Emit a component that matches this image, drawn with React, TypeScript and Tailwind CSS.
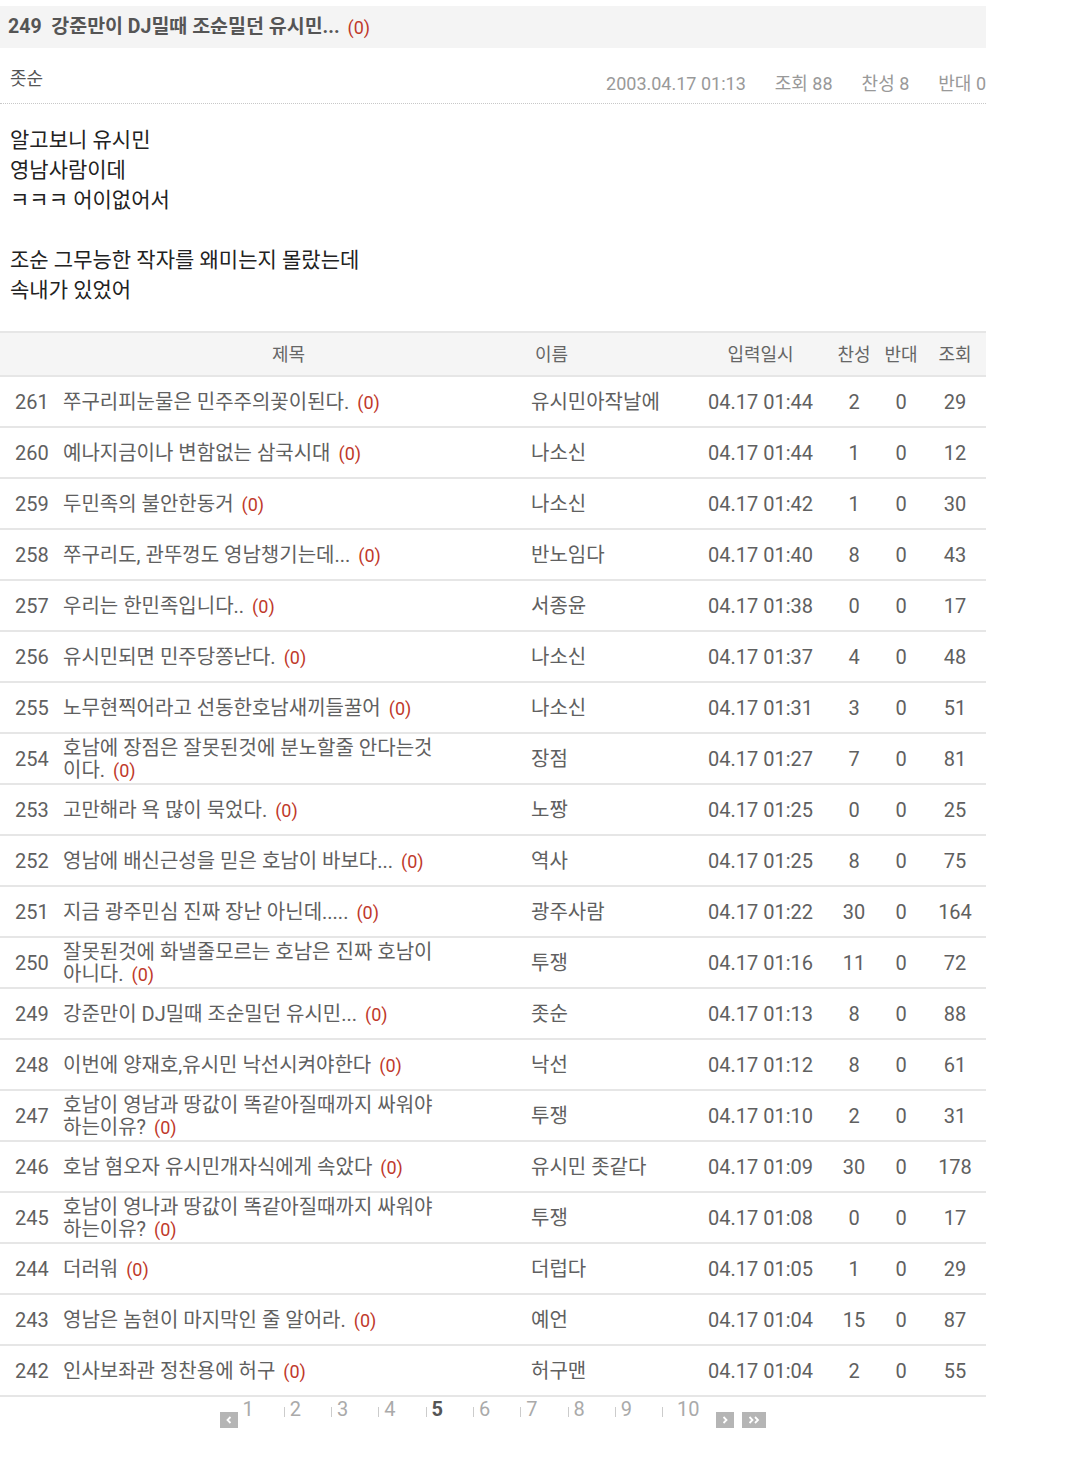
import React from "react";

type Post = {
  no: number;
  title: string;
  name: string;
  date: string;
  up: number;
  down: number;
  views: number;
};

const POSTS: Post[] = [
  { no: 261, title: "쭈구리피눈물은 민주주의꽃이된다.", name: "유시민아작날에", date: "04.17 01:44", up: 2, down: 0, views: 29 },
  { no: 260, title: "예나지금이나 변함없는 삼국시대", name: "나소신", date: "04.17 01:44", up: 1, down: 0, views: 12 },
  { no: 259, title: "두민족의 불안한동거", name: "나소신", date: "04.17 01:42", up: 1, down: 0, views: 30 },
  { no: 258, title: "쭈구리도, 관뚜껑도 영남챙기는데...", name: "반노임다", date: "04.17 01:40", up: 8, down: 0, views: 43 },
  { no: 257, title: "우리는 한민족입니다..", name: "서종윤", date: "04.17 01:38", up: 0, down: 0, views: 17 },
  { no: 256, title: "유시민되면 민주당쫑난다.", name: "나소신", date: "04.17 01:37", up: 4, down: 0, views: 48 },
  { no: 255, title: "노무현찍어라고 선동한호남새끼들꿀어", name: "나소신", date: "04.17 01:31", up: 3, down: 0, views: 51 },
  { no: 254, title: "호남에 장점은 잘못된것에 분노할줄 안다는것 이다.", name: "장점", date: "04.17 01:27", up: 7, down: 0, views: 81 },
  { no: 253, title: "고만해라 욕 많이 묵었다.", name: "노짱", date: "04.17 01:25", up: 0, down: 0, views: 25 },
  { no: 252, title: "영남에 배신근성을 믿은 호남이 바보다...", name: "역사", date: "04.17 01:25", up: 8, down: 0, views: 75 },
  { no: 251, title: "지금 광주민심 진짜 장난 아닌데.....", name: "광주사람", date: "04.17 01:22", up: 30, down: 0, views: 164 },
  { no: 250, title: "잘못된것에 화낼줄모르는 호남은 진짜 호남이 아니다.", name: "투쟁", date: "04.17 01:16", up: 11, down: 0, views: 72 },
  { no: 249, title: "강준만이 DJ밀때 조순밀던 유시민...", name: "좃순", date: "04.17 01:13", up: 8, down: 0, views: 88 },
  { no: 248, title: "이번에 양재호,유시민 낙선시켜야한다", name: "낙선", date: "04.17 01:12", up: 8, down: 0, views: 61 },
  { no: 247, title: "호남이 영남과 땅값이 똑같아질때까지 싸워야 하는이유?", name: "투쟁", date: "04.17 01:10", up: 2, down: 0, views: 31 },
  { no: 246, title: "호남 혐오자 유시민개자식에게 속았다", name: "유시민 좃같다", date: "04.17 01:09", up: 30, down: 0, views: 178 },
  { no: 245, title: "호남이 영나과 땅값이 똑같아질때까지 싸워야 하는이유?", name: "투쟁", date: "04.17 01:08", up: 0, down: 0, views: 17 },
  { no: 244, title: "더러워", name: "더럽다", date: "04.17 01:05", up: 1, down: 0, views: 29 },
  { no: 243, title: "영남은 놈현이 마지막인 줄 알어라.", name: "예언", date: "04.17 01:04", up: 15, down: 0, views: 87 },
  { no: 242, title: "인사보좌관 정찬용에 허구", name: "허구맨", date: "04.17 01:04", up: 2, down: 0, views: 55 },
];

const BODY = ["알고보니 유시민", "영남사람이데", "ㅋㅋㅋ 어이없어서", "", "조순 그무능한 작자를 왜미는지 몰랐는데", "속내가 있었어"];

const COLS = "grid grid-cols-[63px_468px_152px_153px_36px_58px_56px]";

function Count() {
  return <span className="ml-2 inline-block text-[18px] leading-[20px] text-[#c0392b]">(0)</span>;
}

function PostRow({ post }: { post: Post }) {
  return (
    <div className={`${COLS} h-[51px] items-center border-b-2 border-[#e6e6e6] text-[20px] text-[#606060]`}>
      <div className="pl-[15px]">{post.no}</div>
      <div className="max-w-[380px] leading-[22px]">
        {post.title}
        <Count />
      </div>
      <div className="whitespace-nowrap">{post.name}</div>
      <div className="pl-[2px] text-center">{post.date}</div>
      <div className="text-center">{post.up}</div>
      <div className="text-center">{post.down}</div>
      <div className="pr-[6px] text-center">{post.views}</div>
    </div>
  );
}

// small grey nav buttons with white chevrons
function PageBox({ kind }: { kind: "prev" | "next" | "last" }) {
  const wide = kind === "last";
  return (
    <span className={`mt-[15px] flex h-[16px] items-center justify-center bg-[#b5b5b5] ${wide ? "w-[24px]" : "w-[18px]"}`}>
      <svg width={wide ? 12 : 6} height="8" viewBox={wide ? "0 0 12 8" : "0 0 6 8"} fill="none" stroke="white" strokeWidth="1.8">
        {kind === "prev" && <polyline points="4.5,1 1.5,4 4.5,7" />}
        {kind === "next" && <polyline points="1.5,1 4.5,4 1.5,7" />}
        {kind === "last" && (
          <>
            <polyline points="1.5,1 4.5,4 1.5,7" />
            <polyline points="7,1 10,4 7,7" />
          </>
        )}
      </svg>
    </span>
  );
}

export default function App() {
  return (
    <div className="min-h-[1469px] w-[1080px] bg-white font-['Roboto','Noto_Sans_CJK_KR',sans-serif]">
      <div className="w-[986px] pt-[6px]">
        {/* post header */}
        <div className="flex h-[42px] items-center bg-[#f4f4f4] pl-[8px] text-[19.5px] font-bold text-[#555]">
          249&nbsp; 강준만이 DJ밀때 조순밀던 유시민...
          <span className="ml-2 text-[18px] font-normal text-[#c0392b]">(0)</span>
        </div>
        <div className="flex h-[56px] items-center justify-between border-b border-dotted border-[#c8c8c8] pl-[10px]">
          <span className="pt-[6px] text-[18px] text-[#555]">좃순</span>
          <div className="flex gap-[29px] pt-[16px] text-[18px] text-[#999]">
            <span>2003.04.17 01:13</span>
            <span>조회 88</span>
            <span>찬성 8</span>
            <span>반대 0</span>
          </div>
        </div>

        {/* post body */}
        <div className="pl-[10px] pt-[21px] text-[21px] leading-[30px] text-[#222]">
          {BODY.map((line, i) => (
            <div key={i} className="h-[30px]">
              {line}
            </div>
          ))}
        </div>

        {/* post list */}
        <div className="mt-[26px] border-t-2 border-[#e6e6e6]">
          <div className={`${COLS} h-[44px] items-center border-b-2 border-[#e6e6e6] bg-[#f5f5f5] text-[18px] text-[#666]`}>
            <div className="col-span-2 pl-[46px] text-center">제목</div>
            <div className="pl-[4px]">이름</div>
            <div className="pl-[2px] text-center">입력일시</div>
            <div className="text-center">찬성</div>
            <div className="text-center">반대</div>
            <div className="pr-[6px] text-center">조회</div>
          </div>
          {POSTS.map((p) => (
            <PostRow key={p.no} post={p} />
          ))}
        </div>

        {/* pagination */}
        <div className="flex items-start justify-center text-[20px] leading-[24px] text-[#aaa]">
          <PageBox kind="prev" />
          <span className="ml-[5px]">1</span>
          {[2, 3, 4, 5, 6, 7, 8, 9, 10].map((n) => (
            <span key={n} className="ml-[30px] flex items-start">
              <span className="mt-[10px] h-[10px] w-px bg-[#ccc]" />
              <span className={n === 10 ? "ml-[14px]" : n === 5 ? "ml-[5px] font-bold text-[#555]" : "ml-[5px]"}>{n}</span>
            </span>
          ))}
          <span className="ml-[17px]">
            <PageBox kind="next" />
          </span>
          <span className="ml-[8px]">
            <PageBox kind="last" />
          </span>
        </div>
      </div>
    </div>
  );
}
